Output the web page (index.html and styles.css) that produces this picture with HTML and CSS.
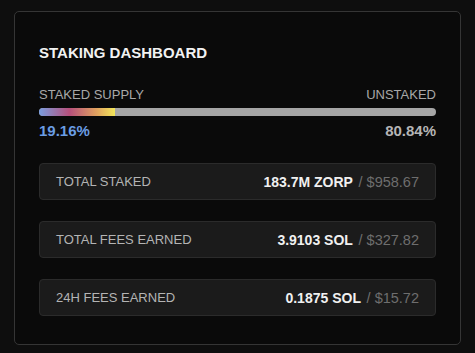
FILE: index.html
```html
<!DOCTYPE html>
<html lang="en">
<head>
    <meta charset="UTF-8">
    <title>Staking Dashboard</title>
    <link rel="stylesheet" href="styles.css">
</head>
<body>
    <div class="card">
        <h2 class="title">STAKING DASHBOARD</h2>

        <div class="supply">
            <div class="supply-labels">
                <span>STAKED SUPPLY</span>
                <span>UNSTAKED</span>
            </div>
            <div class="bar">
                <div class="bar-fill" style="width: 19.16%"></div>
            </div>
            <div class="supply-values">
                <span class="staked-pct">19.16%</span>
                <span class="unstaked-pct">80.84%</span>
            </div>
        </div>

        <div class="stats">
            <div class="stat">
                <span class="stat-label">TOTAL STAKED</span>
                <span class="stat-value">183.7M ZORP <span class="usd">/ $958.67</span></span>
            </div>
            <div class="stat">
                <span class="stat-label">TOTAL FEES EARNED</span>
                <span class="stat-value">3.9103 SOL <span class="usd">/ $327.82</span></span>
            </div>
            <div class="stat">
                <span class="stat-label">24H FEES EARNED</span>
                <span class="stat-value">0.1875 SOL <span class="usd">/ $15.72</span></span>
            </div>
        </div>
    </div>
</body>
</html>
```

FILE: styles.css
```css
body {
    margin: 0;
    padding: 11px 14px;
    background: #0e0e0e;
    font-family: "Liberation Sans", Arial, sans-serif;
    color: #fff;
}
.card {
    background: #0a0a0a;
    border: 1px solid #353535;
    border-radius: 5px;
    padding: 31px 24px 28px;
}
.title {
    margin: 0 0 24px;
    font-size: 15px;
    font-weight: bold;
    line-height: 20px;
    color: #f2f2f2;
}
.supply-labels, .supply-values {
    display: flex;
    justify-content: space-between;
}
.supply-labels {
    font-size: 13px;
    line-height: 16px;
    color: #a8a8a8;
}
.bar {
    height: 8px;
    margin: 5px 0 6px;
    background: #a6a6a6;
    border-radius: 4px;
    overflow: hidden;
}
.bar-fill {
    height: 100%;
    background: linear-gradient(90deg, #7a9edf 0%, #b7507c 40%, #e0a060 75%, #f2e65a 100%);
}
.supply-values {
    font-size: 15px;
    font-weight: bold;
    line-height: 18px;
}
.staked-pct {
    color: #6a9de3;
}
.unstaked-pct {
    color: #b5b5b5;
}
.stats {
    margin-top: 23px;
    display: flex;
    flex-direction: column;
    gap: 21px;
}
.stat {
    display: flex;
    justify-content: space-between;
    align-items: center;
    height: 35px;
    padding: 0 16px;
    background: #1b1b1b;
    border: 1px solid #2b2b2b;
    border-radius: 4px;
}
.stat-label {
    font-size: 13px;
    color: #b4b4b4;
}
.stat-value {
    font-size: 14px;
    font-weight: bold;
    color: #f0f0f0;
}
.usd {
    margin-left: 2px;
    font-size: 14.5px;
    font-weight: normal;
    color: #6e6e6e;
}
```
